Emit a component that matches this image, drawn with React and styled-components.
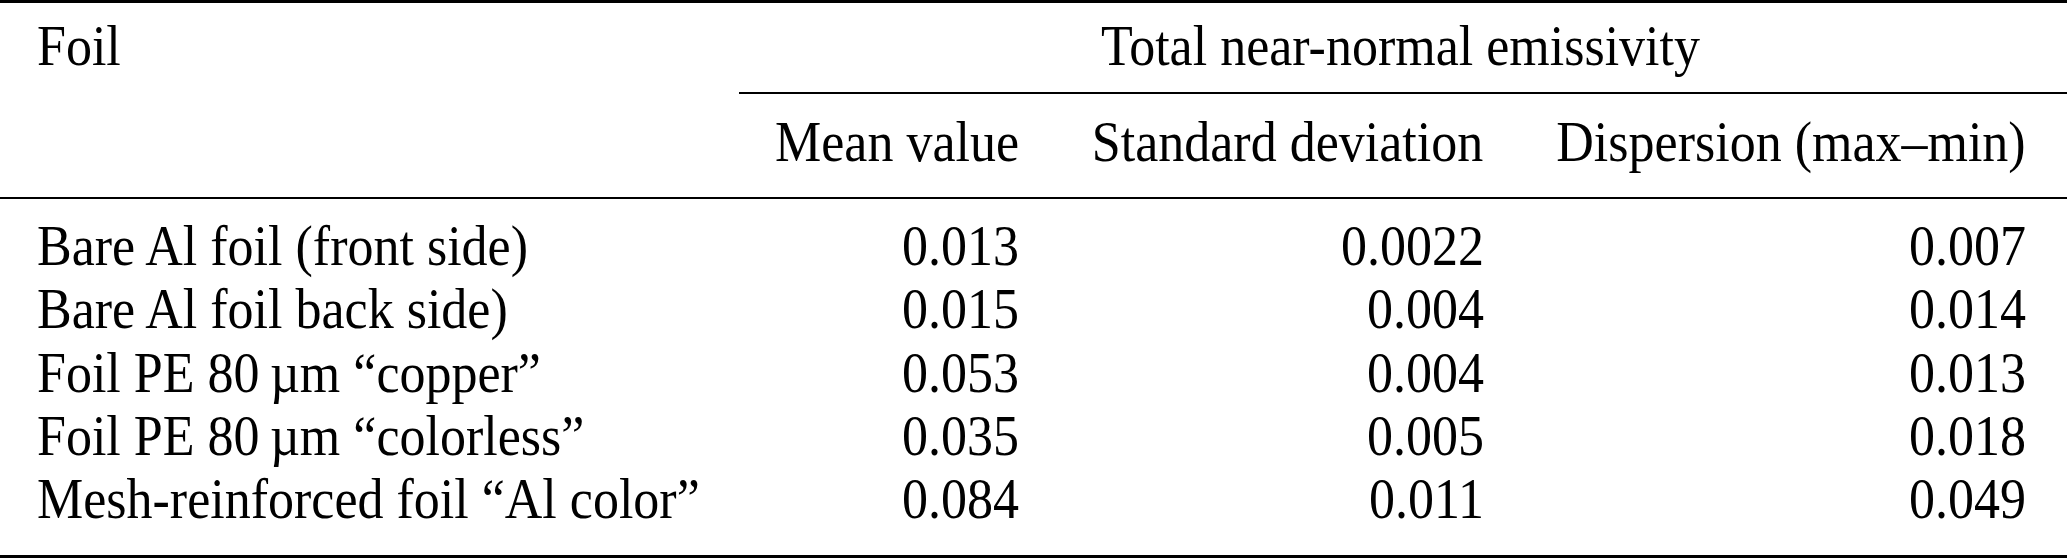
import styled, { createGlobalStyle } from "styled-components";

const GlobalStyle = createGlobalStyle`
  html, body {
    margin: 0;
    padding: 0;
    background: #fff;
  }
`;

const rows = [
  { name: "Bare Al foil (front side)", mean: "0.013", sd: "0.0022", disp: "0.007" },
  { name: "Bare Al foil back side)", mean: "0.015", sd: "0.004", disp: "0.014" },
  { name: "Foil PE 80\u2009\u00b5m \u201ccopper\u201d", mean: "0.053", sd: "0.004", disp: "0.013" },
  { name: "Foil PE 80\u2009\u00b5m \u201ccolorless\u201d", mean: "0.035", sd: "0.005", disp: "0.018" },
  { name: "Mesh-reinforced foil \u201cAl color\u201d", mean: "0.084", sd: "0.011", disp: "0.049" },
];

export default function App() {
  return (
    <>
      <GlobalStyle />
      <Table>
        <colgroup>
          <col style={{ width: 739 }} />
          <col style={{ width: 316 }} />
          <col style={{ width: 465 }} />
          <col style={{ width: 547 }} />
        </colgroup>
        <thead>
          <tr>
            <FoilHead rowSpan={2}><Txt>Foil</Txt></FoilHead>
            <GroupHead colSpan={3}><Txt>Total near-normal emissivity</Txt></GroupHead>
          </tr>
          <tr>
            <SubHead><Txt>Mean value</Txt></SubHead>
            <SubHead><Txt>Standard deviation</Txt></SubHead>
            <SubHead $last><Txt>Dispersion (max–min)</Txt></SubHead>
          </tr>
        </thead>
        <tbody>
          {rows.map((r, i) => {
            const pos = i === 0 ? "first" : i === rows.length - 1 ? "last" : "mid";
            return (
              <tr key={r.name}>
                <NameCell $pos={pos}><Txt>{r.name}</Txt></NameCell>
                <NumCell $pos={pos}><Txt>{r.mean}</Txt></NumCell>
                <NumCell $pos={pos}><Txt>{r.sd}</Txt></NumCell>
                <NumCell $pos={pos} $last><Txt>{r.disp}</Txt></NumCell>
              </tr>
            );
          })}
        </tbody>
      </Table>
    </>
  );
}

const Table = styled.table`
  width: 2067px;
  table-layout: fixed;
  border-collapse: separate;
  border-spacing: 0;
  border-top: 3px solid #000;
  border-bottom: 3px solid #000;
  font-family: "Liberation Serif", "Times New Roman", serif;
  font-size: 52px;
  line-height: 63.4px;
  color: #000;
  white-space: nowrap;
`;

// the source typesetting is a touch taller than Liberation Serif at equal width
const Txt = styled.span`
  display: inline-block;
  transform: scaleY(1.08);
  transform-origin: 50% 49px;
`;

const FoilHead = styled.th`
  font-weight: normal;
  text-align: left;
  vertical-align: top;
  padding: 13px 0 21px 37px;
  border-bottom: 2px solid #000;
`;

const GroupHead = styled.th`
  font-weight: normal;
  text-align: center;
  padding: 13px 41px 13px 36px;
  border-bottom: 2px solid #000;
`;

const SubHead = styled.th`
  font-weight: normal;
  text-align: center;
  padding: 18px ${(p) => (p.$last ? "41px" : "36px")} 21px 36px;
  border-bottom: 2px solid #000;
`;

const padFor = (pos) =>
  pos === "first" ? "17px 0 0" : pos === "last" ? "0 0 22px" : "0";

const NameCell = styled.td`
  text-align: left;
  padding: ${(p) => padFor(p.$pos)};
  padding-left: 37px;
`;

const NumCell = styled.td`
  text-align: right;
  padding: ${(p) => padFor(p.$pos)};
  padding-left: 36px;
  padding-right: ${(p) => (p.$last ? "41px" : "36px")};
`;
